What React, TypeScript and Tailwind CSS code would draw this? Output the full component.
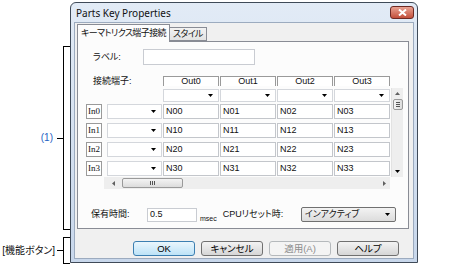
import React from "react";

const jp =
  "font-['Liberation_Sans','Noto_Sans_CJK_JP',sans-serif] [font-feature-settings:'palt']";

function Down() {
  return (
    <svg width="5" height="3" viewBox="0 0 5 3" className="shrink-0">
      <path d="M0 0H5L2.5 3Z" fill="#000" />
    </svg>
  );
}

function Combo({ className = "" }: { className?: string }) {
  return (
    <div
      className={`bg-white border border-[#d4d7dc] flex items-center justify-end pr-[5px] ${className}`}
    >
      <Down />
    </div>
  );
}

function Cell({ text }: { text: string }) {
  return (
    <div className="w-[56px] h-full bg-white border border-[#c3c6cb] flex items-center pl-[2px] text-[9px] leading-none">
      {text}
    </div>
  );
}

function Btn({
  label,
  kind = "normal",
}: {
  label: string;
  kind?: "normal" | "default" | "disabled";
}) {
  const skin =
    kind === "default"
      ? "border-[#3c7fb1] bg-gradient-to-b from-[#eaf6fd] to-[#bde3f7] text-black"
      : kind === "disabled"
        ? "border-[#b5b9bc] bg-[#f4f4f4] text-[#8c8c8c]"
        : "border-[#707070] bg-gradient-to-b from-[#f3f3f3] to-[#d6d6d6] text-black";
  return (
    <div
      className={`w-[62px] h-[15px] rounded-[3px] border flex items-center justify-center text-[9.5px] leading-none ${skin}`}
    >
      {label}
    </div>
  );
}

export default function App() {
  const outs = ["Out0", "Out1", "Out2", "Out3"];
  const rows = [0, 1, 2, 3];

  return (
    <div className={`w-[473px] h-[266px] bg-white flex overflow-hidden text-[#111] ${jp}`}>
      {/* annotations */}
      <div className="w-[70px] shrink-0 flex flex-col pt-[46px]">
        <div className="flex items-center h-[184px]">
          <span className="flex-1 text-right pr-[4px] text-[10px] leading-none text-[#2563c4]">
            (1)
          </span>
          <div className="w-[6px] h-px bg-black" />
          <div className="w-[7px] h-full border-l border-y border-black" />
        </div>
        <div className="flex items-center h-[27px] mt-[7px]">
          <span className="flex-1 text-right pr-[2px] text-[10px] leading-none whitespace-nowrap">
            [機能ボタン]
          </span>
          <div className="w-[6px] h-px bg-black" />
          <div className="w-[7px] h-full border-l border-y border-black" />
        </div>
      </div>

      {/* dialog window */}
      <div className="mt-[2px] w-[348px] h-[261px] shrink-0 flex flex-col border border-[#3f4a58] rounded-t-[6px] bg-gradient-to-b from-[#e2ebf6] to-[#c8d7eb]">
        <div className="h-[19px] flex items-center justify-between pl-[5px] pr-[3px]">
          <span className="text-[10px] leading-none font-['Noto_Sans',sans-serif]">
            Parts Key Properties
          </span>
          <div className="w-[24px] h-[13px] rounded-[3px] border border-[#6d2a23] bg-gradient-to-b from-[#e9a393] to-[#c24e3a] flex items-center justify-center">
            <svg width="9" height="7" viewBox="0 0 9 7">
              <path d="M1 0.5L8 6.5M8 0.5L1 6.5" stroke="#fff" strokeWidth="2" />
            </svg>
          </div>
        </div>

        <div className="flex-1 mx-[3px] mb-[3px] bg-[#f0f0f0] border border-[#9cabbf] flex flex-col pt-[1px]">
          {/* tabs */}
          <div className="flex items-end h-[17px] ml-[2px] relative z-10 text-[9px] tracking-[-0.6px] leading-none">
            <div className="h-[18px] -mb-px bg-[#fcfcfc] border border-b-0 border-[#898c95] flex items-center px-[3px]">
              キーマトリクス端子接続
            </div>
            <div className="h-[14px] border border-l-0 border-[#898c95] bg-gradient-to-b from-[#f2f2f2] to-[#e3e3e3] flex items-center px-[3px]">
              スタイル
            </div>
          </div>

          {/* tab panel */}
          <div className="ml-[2px] w-[332px] h-[188px] border border-[#898c95] bg-[#fcfcfc] flex flex-col text-[9px] leading-none">
            <div className="flex items-center mt-[7px] h-[16px]">
              <span className="w-[65px] pl-[15px]">ラベル:</span>
              <div className="w-[112px] h-full bg-white border border-[#c9ccd2]" />
            </div>

            <div className="flex items-center mt-[11px] h-[10px]">
              <span className="w-[85px] pl-[15px]">接続端子:</span>
              <div className="flex gap-px h-full">
                {outs.map((o) => (
                  <div
                    key={o}
                    className="w-[56px] h-full border-t border-x border-[#9a9a9a] bg-white flex items-center justify-center text-[9px]"
                  >
                    {o}
                  </div>
                ))}
              </div>
            </div>

            {/* grid */}
            <div className="flex mt-[2px]">
              <div className="w-[26px] pl-[8px] pt-[16px] flex flex-col gap-[4px]">
                {rows.map((r) => (
                  <div
                    key={r}
                    className="w-[16px] h-[15px] bg-white border border-[#9a9a9a] flex items-center pl-[1px] text-[9px] font-['Liberation_Serif',serif]"
                  >
                    In{r}
                  </div>
                ))}
              </div>

              <div className="w-[299px] flex flex-col">
                <div className="flex h-[89px]">
                  <div className="w-[287px] flex flex-col">
                    <div className="flex gap-px mt-[1px] h-[13px] pl-[59px]">
                      {outs.map((o) => (
                        <Combo key={o} className="w-[56px] h-full" />
                      ))}
                    </div>
                    {rows.map((r) => (
                      <div
                        key={r}
                        className={`flex gap-px h-[15px] pl-[3px] ${r === 0 ? "mt-[2px]" : "mt-[4px]"}`}
                      >
                        <Combo className="w-[55px] h-full" />
                        {[0, 1, 2, 3].map((c) => (
                          <Cell key={c} text={`N${r}${c}`} />
                        ))}
                      </div>
                    ))}
                  </div>
                  {/* vertical scrollbar */}
                  <div className="w-[12px] h-full bg-[#eeeeee] border-l border-[#e2e2e2] flex flex-col items-center">
                    <div className="h-[11px] flex items-center justify-center">
                      <svg width="5" height="3" viewBox="0 0 5 3">
                        <path d="M0 3H5L2.5 0Z" fill="#606060" />
                      </svg>
                    </div>
                    <div className="w-[10px] h-[11px] rounded-[2px] border border-[#9a9a9a] bg-gradient-to-r from-[#f4f4f4] to-[#dcdcdc] flex flex-col items-center justify-center gap-px">
                      <div className="w-[4px] h-px bg-[#555]" />
                      <div className="w-[4px] h-px bg-[#555]" />
                      <div className="w-[4px] h-px bg-[#555]" />
                    </div>
                    <div className="flex-1" />
                    <div className="h-[11px] flex items-center justify-center">
                      <Down />
                    </div>
                  </div>
                </div>
                {/* horizontal scrollbar */}
                <div className="w-[286px] h-[12px] bg-[#eeeeee] flex items-center">
                  <div className="w-[18px] flex justify-center">
                    <svg width="3" height="5" viewBox="0 0 3 5">
                      <path d="M3 0V5L0 2.5Z" fill="#606060" />
                    </svg>
                  </div>
                  <div className="w-[61px] h-[10px] rounded-[2px] border border-[#9a9a9a] bg-gradient-to-b from-[#f4f4f4] to-[#dcdcdc] flex items-center justify-center gap-px">
                    <div className="w-px h-[4px] bg-[#555]" />
                    <div className="w-px h-[4px] bg-[#555]" />
                    <div className="w-px h-[4px] bg-[#555]" />
                  </div>
                  <div className="flex-1" />
                  <div className="w-[12px] flex justify-center">
                    <svg width="3" height="5" viewBox="0 0 3 5">
                      <path d="M0 0V5L3 2.5Z" fill="#606060" />
                    </svg>
                  </div>
                </div>
              </div>
            </div>

            {/* bottom settings */}
            <div className="flex items-center mt-[18px] h-[15px]">
              <span className="w-[69px] pl-[13px]">保有時間:</span>
              <div className="w-[50px] h-[14px] bg-white border border-[#c9ccd2] flex items-center pl-[2px] text-[9px]">
                0.5
              </div>
              <span className="self-end ml-[3px] text-[7px]">msec</span>
              <span className="w-[78px] ml-[6px]">CPUリセット時:</span>
              <div className="w-[95px] h-[15px] rounded-[2px] border border-[#707070] bg-gradient-to-b from-[#f3f3f3] to-[#dcdcdc] flex items-center justify-between pl-[3px] pr-[5px]">
                <span>インアクティブ</span>
                <Down />
              </div>
            </div>
          </div>

          {/* function buttons */}
          <div className="flex gap-[6px] mt-[12px] pl-[58px]">
            <Btn label="OK" kind="default" />
            <Btn label="キャンセル" />
            <Btn label="適用(A)" kind="disabled" />
            <Btn label="ヘルプ" />
          </div>
        </div>
      </div>
    </div>
  );
}
